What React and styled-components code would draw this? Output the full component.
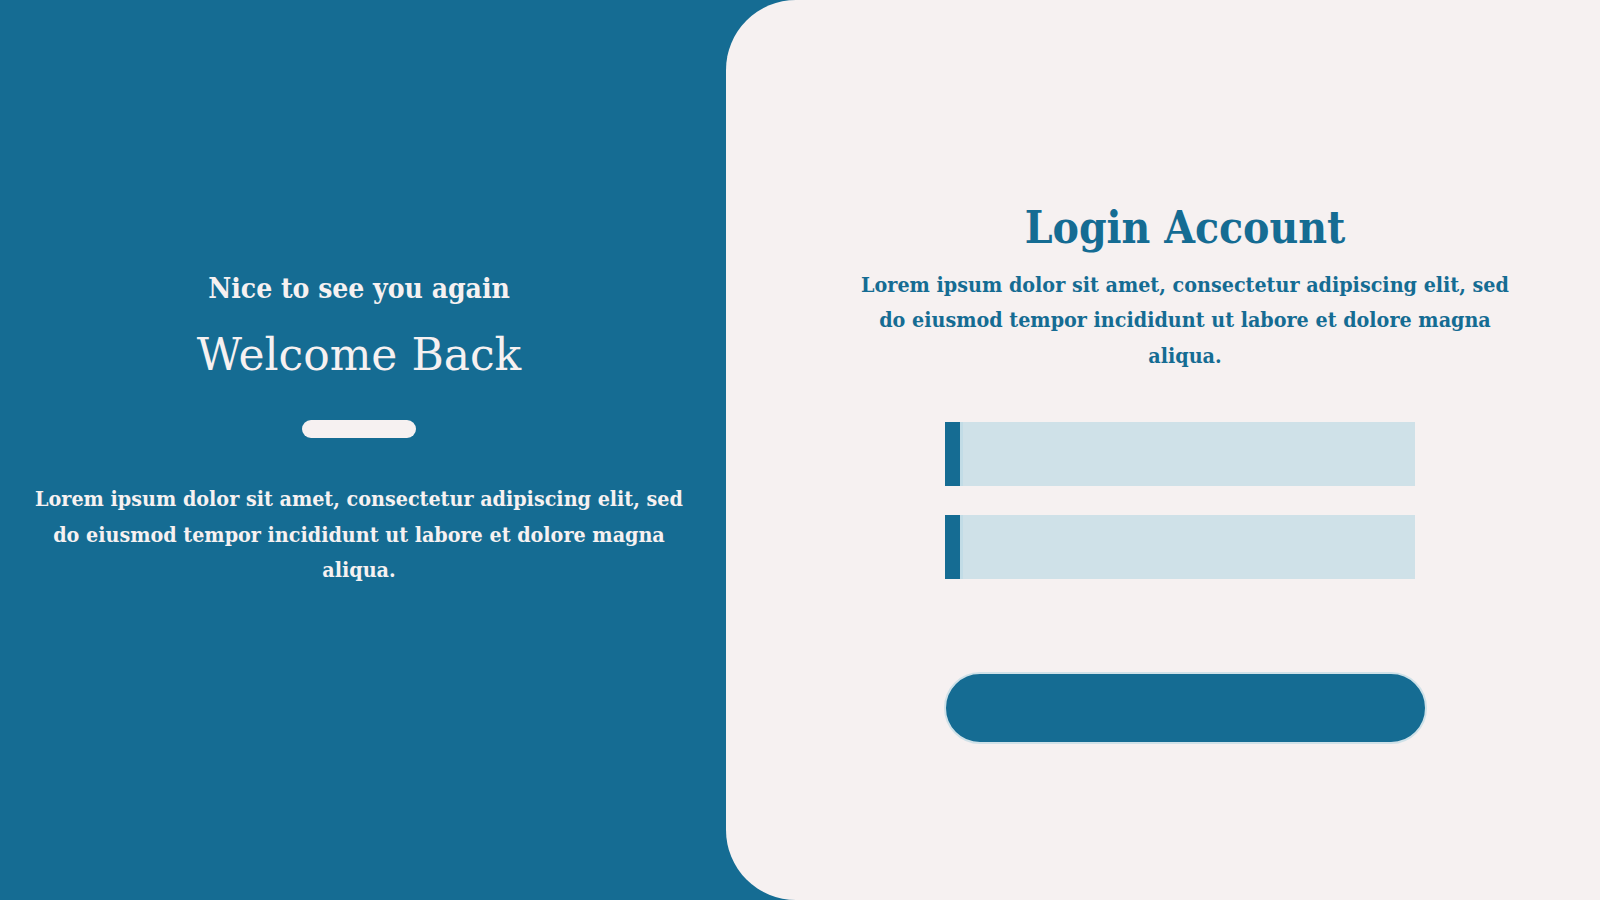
import React from "react";
import styled, { createGlobalStyle } from "styled-components";

const Global = createGlobalStyle`
  html, body { margin: 0; padding: 0; }
  body { font-family: "DejaVu Serif Condensed", "DejaVu Serif", serif; background: #156c93; }
  * { box-sizing: border-box; }
`;

const Page = styled.div`
  display: flex;
  width: 1600px;
  height: 900px;
  background: #156c93;
  overflow: hidden;
`;

const LeftPanel = styled.section`
  width: 726px;
  flex-shrink: 0;
  display: flex;
  flex-direction: column;
  align-items: center;
  padding: 272px 8px 0 0;
  color: #f6f1f1;
  text-align: center;
`;

const Greeting = styled.h3`
  margin: 0;
  font-size: 28px;
  font-weight: 700;
  line-height: 1.2;
`;

const BigTitle = styled.h1`
  margin: 23px 0 0;
  font-family: "DejaVu Serif", serif;
  font-size: 44px;
  font-weight: 400;
  line-height: 1.2;
`;

const Pill = styled.div`
  width: 114px;
  height: 18px;
  border-radius: 9px;
  background: #f6f1f1;
  margin-top: 39px;
`;

const Text = styled.p`
  margin: ${(p) => p.$mt || "0"};
  width: 670px;
  font-size: 21.3px;
  font-weight: 700;
  line-height: 35.5px;
  color: ${(p) => p.$color || "inherit"};
`;

const RightPanel = styled.section`
  flex: 1;
  background: #f6f1f1;
  border-radius: 70px 0 0 70px;
  display: flex;
  flex-direction: column;
  align-items: center;
  padding: 202px 0 0 44px;
  text-align: center;
`;

const Title = styled.h1`
  margin: 0;
  font-size: 44px;
  font-weight: 700;
  line-height: 1.2;
  color: #156c93;
`;

const Form = styled.form`
  display: flex;
  flex-direction: column;
  align-items: center;
  margin-top: 37px;
`;

const Field = styled.input`
  display: block;
  width: 470px;
  height: 64px;
  margin: 0 10px 29px 0;
  border: none;
  border-left: 15px solid #156c93;
  box-shadow: inset 3px 0 0 #c2dce6;
  background: #cfe1e8;
  outline: none;
  font: inherit;
`;

const Submit = styled.button`
  margin-top: 64px;
  width: 483px;
  height: 72px;
  border-radius: 36px;
  border: 2px solid #cfe1e8;
  background: #156c93;
  cursor: pointer;
`;

export default function App() {
  return (
    <>
      <Global />
      <Page>
        <LeftPanel>
          <Greeting>Nice to see you again</Greeting>
          <BigTitle>Welcome Back</BigTitle>
          <Pill />
          <Text $mt="43px">
            Lorem ipsum dolor sit amet, consectetur adipiscing elit, sed do eiusmod tempor incididunt ut labore et dolore magna aliqua.
          </Text>
        </LeftPanel>
        <RightPanel>
          <Title>Login Account</Title>
          <Text $color="#156c93" $mt="12px">
            Lorem ipsum dolor sit amet, consectetur adipiscing elit, sed do eiusmod tempor incididunt ut labore et dolore magna aliqua.
          </Text>
          <Form onSubmit={(e) => e.preventDefault()}>
            <Field type="text" />
            <Field type="password" />
            <Submit type="submit" />
          </Form>
        </RightPanel>
      </Page>
    </>
  );
}
